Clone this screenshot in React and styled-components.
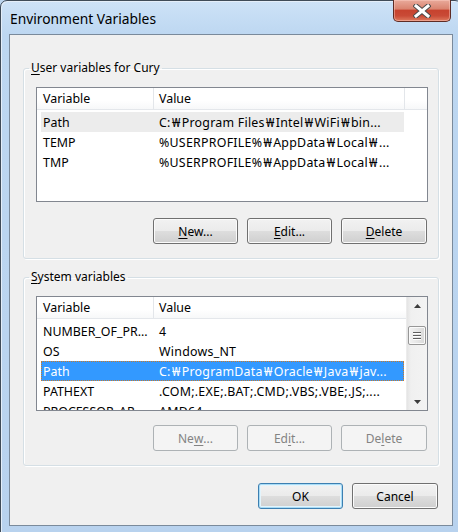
import styled, { createGlobalStyle, css } from 'styled-components';

const GlobalStyle = createGlobalStyle`
    html, body {
        margin: 0;
        padding: 0;
        overflow: hidden;
        background: #bcd5ef;
    }
    * {
        box-sizing: border-box;
    }
`;

const Window = styled.div`
    width: 462px;
    height: 535px;
    display: flex;
    flex-direction: column;
    padding: 0 8px 8px 8px;
    border: 1px solid #3f4b58;
    border-radius: 7px 7px 0 0;
    box-shadow: inset 1px 1px 0 #e4eef9;
    background: linear-gradient(180deg, #cde2f7 0%, #bdd7f1 34px, #b8d2ee 100%);
    font-family: 'Noto Sans', 'Open Sans', sans-serif;
    font-size: 12px;
    color: #000;
`;

const TitleBar = styled.div`
    height: 33px;
    display: flex;
    justify-content: space-between;
    align-items: flex-start;
`;

const Title = styled.div`
    padding: 8px 0 0 1px;
    font-size: 13.8px;
    color: #000;
`;

const CloseButton = styled.div`
    width: 58px;
    height: 22px;
    margin: -1px 2px 0 0;
    display: flex;
    align-items: center;
    justify-content: center;
    border: 1px solid #5e2b24;
    border-top: none;
    border-radius: 0 0 5px 5px;
    background: linear-gradient(180deg, #e9aa9b 0%, #da8470 42%, #c7432f 50%, #c94a36 75%, #de7a5e 100%);
    box-shadow: inset 0 0 0 1px rgba(255, 210, 200, 0.45);
`;

const Client = styled.div`
    flex: 1;
    display: flex;
    flex-direction: column;
    padding: 25px 13px 0 13px;
    background: #f0f0f0;
    border: 1px solid #7a8a9b;
`;

const Group = styled.fieldset`
    margin: 0 0 ${(p) => p.$gap || 0}px 0;
    padding: 11px 10px 14px 12px;
    border: 1px solid #d5dfe5;
    border-radius: 3px;
    box-shadow: inset 1px 1px 0 #fff, 1px 1px 0 #fff;
    min-width: 0;
`;

const Legend = styled.legend`
    margin-left: -7px;
    padding: 0 2px;
    font-size: 12px;
    line-height: 16px;
`;

const Key = styled.span`
    text-decoration: underline;
    text-underline-offset: 2px;
`;

// the Korean UI font draws the backslash as a wide won sign
const Won = styled.span`
    display: inline-block;
    width: 11px;
    text-align: center;
`;

const ListView = styled.div`
    height: 115px;
    display: flex;
    border: 1px solid #828790;
    background: #fff;
    overflow: hidden;
    font-size: 12.4px;
`;

const ListBody = styled.div`
    flex: 1;
    min-width: 0;
    display: flex;
    flex-direction: column;
`;

const HeaderRow = styled.div`
    height: 22px;
    flex: none;
    display: flex;
    margin-bottom: 2px;
    background: linear-gradient(180deg, #ffffff 0%, #ffffff 60%, #f7f8f9 100%);
    border-bottom: 1px solid #e4e7eb;
`;

const HeaderCell = styled.div`
    width: ${(p) => p.$w}px;
    flex: ${(p) => (p.$grow ? 1 : 'none')};
    display: flex;
    align-items: center;
    padding-left: ${(p) => p.$pad}px;
    border-right: ${(p) => (p.$sep ? '1px solid #e3e6ea' : 'none')};
`;

const Row = styled.div`
    height: 20px;
    width: 363px;
    flex: none;
    display: flex;
    align-items: center;
    margin-left: 4px;
    white-space: nowrap;
    ${(p) =>
        p.$state === 'hover' &&
        css`
            background: #ececec;
        `}
    ${(p) =>
        p.$state === 'selected' &&
        css`
            background: #3399ff;
            color: #fff;
            outline: 1px dotted #c97a2a;
            outline-offset: -1px;
        `}
`;

const Cell = styled.div`
    width: ${(p) => (p.$first ? '112px' : 'auto')};
    flex: ${(p) => (p.$first ? 'none' : 1)};
    padding-left: ${(p) => (p.$first ? 2 : 6)}px;
    letter-spacing: ${(p) => (p.$first ? 0 : 0.25)}px;
    overflow: hidden;
`;

const ScrollBar = styled.div`
    width: 21px;
    flex: none;
    display: flex;
    flex-direction: column;
    background: linear-gradient(90deg, #e4e4e4 0%, #f0f0f0 20%, #f3f3f3 100%);
    border-left: 1px solid #ececec;
`;

const ArrowBox = styled.div`
    height: 17px;
    flex: none;
    display: flex;
    align-items: center;
    justify-content: center;
`;

const Track = styled.div`
    flex: 1;
    padding-top: 12px;
`;

const Thumb = styled.div`
    height: 19px;
    margin: 0 1px;
    display: flex;
    flex-direction: column;
    align-items: center;
    justify-content: center;
    gap: 2px;
    border: 1px solid #979797;
    border-radius: 2px;
    background: linear-gradient(90deg, #f3f3f3 0%, #e6e6e6 50%, #d9d9d9 100%);
    box-shadow: inset 0 0 0 1px #fafafa;
`;

const Grip = styled.div`
    width: 8px;
    height: 1px;
    background: #5f5f5f;
    box-shadow: 0 1px 0 #fff;
`;

const ButtonRow = styled.div`
    display: flex;
    justify-content: flex-end;
    gap: 9px;
    margin: ${(p) => p.$top}px 1px 0 0;
`;

const Button = styled.div`
    width: ${(p) => p.$w || 85}px;
    height: 26px;
    display: flex;
    align-items: center;
    justify-content: center;
    border: 1px solid #707070;
    border-radius: 3px;
    background: linear-gradient(180deg, #f2f2f2 0%, #ebebeb 48%, #dddddd 52%, #cfcfcf 100%);
    box-shadow: inset 0 0 0 1px #fbfbfb;
    color: #000;
    ${(p) =>
        p.$disabled &&
        css`
            border-color: #adb2b5;
            background: #f4f4f4;
            box-shadow: none;
            color: #838383;
        `}
    ${(p) =>
        p.$default &&
        css`
            border-color: #3c7fb1;
            box-shadow: inset 0 0 0 1px #a9dcf6, inset 0 0 0 2px #e3f4fc;
        `}
`;

const Footer = styled.div`
    display: flex;
    justify-content: flex-end;
    gap: 9px;
    margin: 17px 1px 0 0;
`;

// "|" marks where the won sign goes
const userVars = [
    { name: 'Path', value: 'C:|Program Files|Intel|WiFi|bin...', state: 'hover' },
    { name: 'TEMP', value: '%USERPROFILE%|AppData|Local|...' },
    { name: 'TMP', value: '%USERPROFILE%|AppData|Local|...' }
];

const systemVars = [
    { name: 'NUMBER_OF_PR...', value: '4' },
    { name: 'OS', value: 'Windows_NT' },
    { name: 'Path', value: 'C:|ProgramData|Oracle|Java|jav...', state: 'selected' },
    { name: 'PATHEXT', value: '.COM;.EXE;.BAT;.CMD;.VBS;.VBE;.JS;....' },
    { name: 'PROCESSOR_AR...', value: 'AMD64' }
];

const renderPath = (value) =>
    value.split('|').map((part, i) => (
        <span key={i}>
            {i > 0 && <Won>₩</Won>}
            {part}
        </span>
    ));

const Arrow = ({ up }) => (
    <svg width="7" height="4" viewBox="0 0 7 4">
        <path d={up ? 'M0 4 L3.5 0 L7 4 Z' : 'M0 0 L3.5 4 L7 0 Z'} fill="#3d3d3d" />
    </svg>
);

const VarList = ({ rows, scroll }) => (
    <ListView>
        <ListBody>
            <HeaderRow>
                <HeaderCell $w={117} $pad={6} $sep>Variable</HeaderCell>
                <HeaderCell $w={251} $pad={5} $sep={!scroll}>Value</HeaderCell>
                {!scroll && <HeaderCell $grow />}
            </HeaderRow>
            {rows.map((row, index) => (
                <Row key={index} $state={row.state}>
                    <Cell $first>{row.name}</Cell>
                    <Cell>{renderPath(row.value)}</Cell>
                </Row>
            ))}
        </ListBody>
        {scroll && (
            <ScrollBar>
                <ArrowBox>
                    <Arrow up />
                </ArrowBox>
                <Track>
                    <Thumb>
                        <Grip />
                        <Grip />
                        <Grip />
                    </Thumb>
                </Track>
                <ArrowBox>
                    <Arrow />
                </ArrowBox>
            </ScrollBar>
        )}
    </ListView>
);

const App = () => {
    return (
        <>
            <GlobalStyle />
            <Window>
                <TitleBar>
                    <Title>Environment Variables</Title>
                    <CloseButton>
                        <svg width="18" height="14" viewBox="0 0 18 14">
                            <path d="M3 2 L15 12 M15 2 L3 12" stroke="#4b4b4b" strokeWidth="5" strokeLinecap="square" />
                            <path d="M3 2 L15 12 M15 2 L3 12" stroke="#ffffff" strokeWidth="3" strokeLinecap="square" />
                        </svg>
                    </CloseButton>
                </TitleBar>
                <Client>
                    <Group $gap={10}>
                        <Legend>
                            <Key>U</Key>ser variables for Cury
                        </Legend>
                        <VarList rows={userVars} />
                        <ButtonRow $top={16}>
                            <Button>
                                <Key>N</Key>ew...
                            </Button>
                            <Button>
                                <Key>E</Key>dit...
                            </Button>
                            <Button $w={86}>
                                <Key>D</Key>elete
                            </Button>
                        </ButtonRow>
                    </Group>
                    <Group>
                        <Legend>
                            <Key>S</Key>ystem variables
                        </Legend>
                        <VarList rows={systemVars} scroll />
                        <ButtonRow $top={14}>
                            <Button $disabled>
                                Ne<Key>w</Key>...
                            </Button>
                            <Button $disabled>
                                Ed<Key>i</Key>t...
                            </Button>
                            <Button $disabled $w={86}>
                                De<Key>l</Key>ete
                            </Button>
                        </ButtonRow>
                    </Group>
                    <Footer>
                        <Button $default>OK</Button>
                        <Button $w={86}>Cancel</Button>
                    </Footer>
                </Client>
            </Window>
        </>
    );
};

export default App;
